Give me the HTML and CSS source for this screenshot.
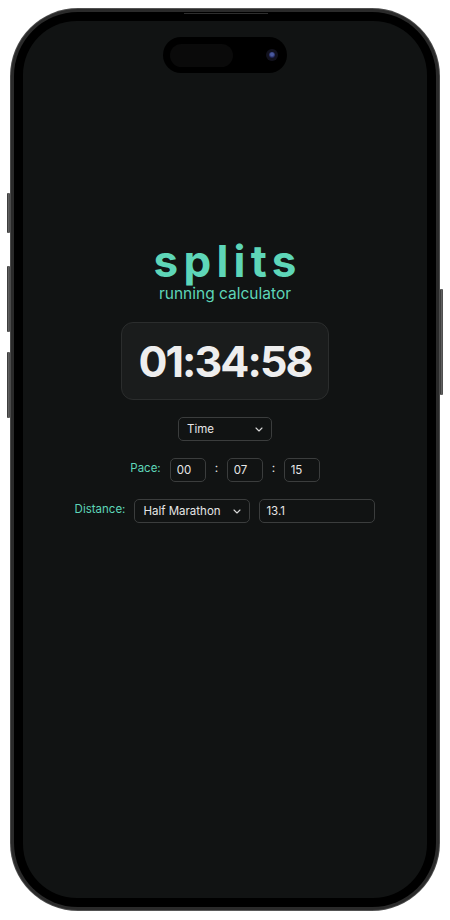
FILE: index.html
```html
<!DOCTYPE html>
<html lang="en">
<head>
<meta charset="utf-8">
<title>splits - running calculator</title>
<link rel="stylesheet" href="styles.css">
</head>
<body>
<div class="phone">
  <span class="btn btn-action"></span>
  <span class="btn btn-vol-up"></span>
  <span class="btn btn-vol-down"></span>
  <span class="btn btn-power"></span>
  <div class="frame">
    <div class="bezel">
      <span class="speaker"></span>
      <div class="screen">
        <div class="island">
          <span class="island-sensor"></span>
          <span class="island-camera"><span class="lens"></span></span>
        </div>
        <main class="app">
          <h1 class="title">splits</h1>
          <p class="subtitle">running calculator</p>
          <div class="timer">01:34:58</div>
          <div class="select select-mode">
            <span>Time</span>
            <svg class="chev" width="8" height="5" viewBox="0 0 8 5"><polyline points="1,1 4,4 7,1" fill="none" stroke="#d8d8d8" stroke-width="1.1" stroke-linecap="round" stroke-linejoin="round"/></svg>
          </div>
          <div class="row">
            <label class="label">Pace:</label>
            <input class="field field-short" type="text" value="00">
            <span class="colon">:</span>
            <input class="field field-short" type="text" value="07">
            <span class="colon">:</span>
            <input class="field field-short" type="text" value="15">
          </div>
          <div class="row">
            <label class="label">Distance:</label>
            <div class="select select-wide">
              <span>Half Marathon</span>
              <svg class="chev" width="8" height="5" viewBox="0 0 8 5"><polyline points="1,1 4,4 7,1" fill="none" stroke="#d8d8d8" stroke-width="1.1" stroke-linecap="round" stroke-linejoin="round"/></svg>
            </div>
            <input class="field field-wide" type="text" value="13.1">
          </div>
        </main>
      </div>
    </div>
  </div>
</div>
</body>
</html>
```

FILE: styles.css
```css
* { box-sizing: border-box; }

html, body {
  margin: 0;
  padding: 0;
  background: #ffffff;
  font-family: "Inter", "Noto Sans", sans-serif;
}

.phone {
  position: relative;
  width: 430px;
  height: 903px;
  margin: 8px 0 0 10px;
  border-radius: 68px;
  background: linear-gradient(90deg, #4a4a4a, #5c5c5c 50%, #4a4a4a);
  padding: 1px;
}

.frame {
  height: 100%;
  border-radius: 67px;
  background: #2a2a2a;
  padding: 3px;
}

.bezel {
  position: relative;
  height: 100%;
  border-radius: 64px;
  background: #000;
  padding: 9px;
}

.speaker {
  position: absolute;
  top: 1px;
  left: 170px;
  width: 84px;
  height: 1px;
  background: #2e2e2e;
}

.screen {
  height: 100%;
  border-radius: 54px;
  background: #111313;
  display: flex;
  flex-direction: column;
  align-items: center;
  overflow: hidden;
}

.btn {
  position: absolute;
  width: 3px;
  background: linear-gradient(90deg, #2c2c2c, #6a6a6a 60%, #3c3c3c);
  border-radius: 1px;
}
.btn-action { left: -3px; top: 185px; height: 40px; }
.btn-vol-up { left: -3px; top: 258px; height: 66px; }
.btn-vol-down { left: -3px; top: 344px; height: 66px; }
.btn-power { right: -3px; top: 281px; height: 106px; }

.island {
  margin-top: 16px;
  width: 124px;
  height: 36px;
  border-radius: 18px;
  background: #000;
  display: flex;
  align-items: center;
  justify-content: space-between;
  padding: 0 9px 0 7px;
  flex-shrink: 0;
}

.island-sensor {
  width: 63px;
  height: 23px;
  border-radius: 12px;
  background: #0a0a0a;
}

.island-camera {
  width: 12px;
  height: 12px;
  border-radius: 50%;
  background: #12121e;
  display: flex;
  align-items: center;
  justify-content: center;
}
.lens {
  width: 6px;
  height: 6px;
  border-radius: 50%;
  background: radial-gradient(circle at 50% 40%, #4a5aa0 0 30%, #1c2050 70%);
}

.app {
  display: flex;
  flex-direction: column;
  align-items: center;
  width: 100%;
}

.title {
  margin: 168px 0 0 0;
  font-size: 44px;
  line-height: 40px;
  font-weight: 700;
  letter-spacing: 0.12em;
  padding-left: 0.12em;
  color: #5ed6b8;
}

.subtitle {
  margin: 4px 0 0 0;
  font-size: 15.5px;
  line-height: 18px;
  font-weight: 400;
  color: #5ed6b8;
}

.timer {
  margin-top: 19px;
  width: 208px;
  height: 78px;
  border: 1px solid #2b2d2d;
  border-radius: 12px;
  background: #1a1c1c;
  padding: 12px 0;
  text-align: center;
  font-size: 43px;
  line-height: 52px;
  font-weight: 700;
  letter-spacing: -0.045em;
  color: #eeeeee;
}

.select {
  height: 24px;
  border: 1px solid #3b3d3d;
  border-radius: 5px;
  background: #111313;
  display: flex;
  align-items: center;
  justify-content: space-between;
  padding: 0 8px 0 8px;
  font-size: 11.5px;
  color: #e6e6e6;
}

.select-mode {
  margin-top: 17px;
  width: 94px;
}

.select-wide { width: 116px; }

.chev { display: block; }

.row {
  margin-top: 17px;
  display: flex;
  align-items: flex-start;
  gap: 9px;
}

.label {
  font-size: 11.5px;
  line-height: 14px;
  padding-top: 3px;
  color: #5ed6b8;
}

.colon {
  font-size: 12px;
  line-height: 14px;
  padding-top: 3px;
  color: #e6e6e6;
  width: 3px;
}

.field {
  height: 24px;
  border: 1px solid #3b3d3d;
  border-radius: 5px;
  background: #111313;
  padding: 0 6px;
  font-family: "Inter", "Noto Sans", sans-serif;
  font-size: 11.5px;
  color: #e6e6e6;
  outline: none;
  margin: 0;
}

.field-short { width: 36px; }
.field-wide { width: 116px; }
```
